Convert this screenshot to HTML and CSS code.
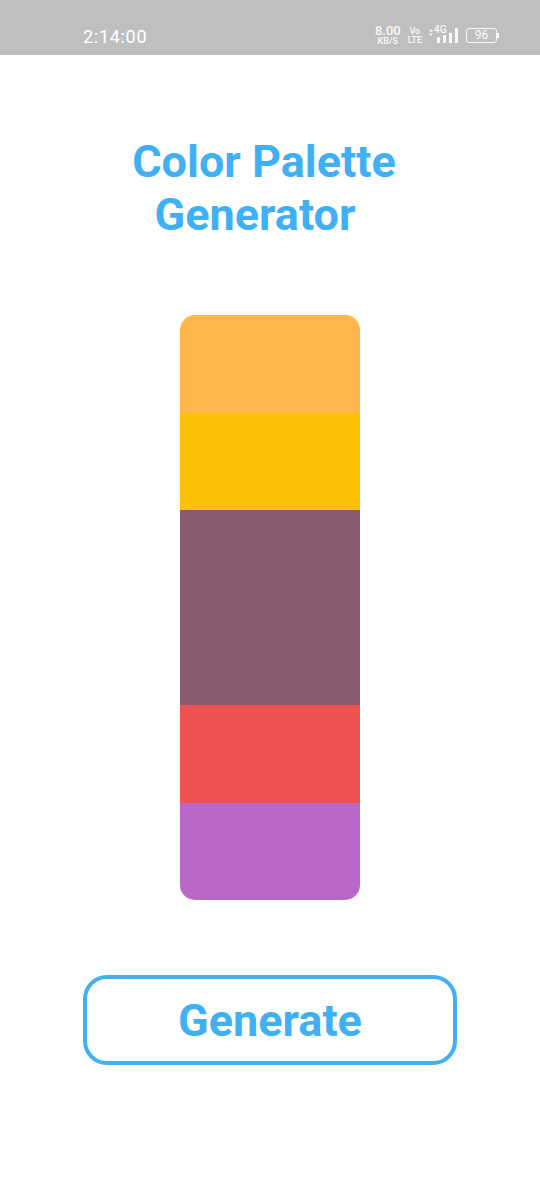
FILE: index.html
```html
<!DOCTYPE html>
<html lang="en">
<head>
<meta charset="UTF-8">
<meta name="viewport" content="width=device-width, initial-scale=1.0">
<title>Color Palette Generator</title>
<link rel="stylesheet" href="styles.css">
</head>
<body>

<!-- status bar -->
<div class="status-bar">
    <span class="clock">2:14:00</span>
    <div class="status-icons">
        <div class="speed"><span class="speed-num">8.00</span><span class="speed-unit">KB/S</span></div>
        <div class="volte"><span>Vo</span><span>LTE</span></div>
        <div class="signal">
            <span class="net">4G</span>
            <svg class="net-arrows" width="4" height="7" viewBox="0 0 4 7"><path d="M2 0 4 2.5H0zM0 4.5h4L2 7z" fill="#fff"/></svg>
            <svg class="bars" width="23" height="16" viewBox="0 0 23 16"><g fill="#fff"><rect x="1" y="9" width="3" height="6"/><rect x="7" y="7" width="3" height="8"/><rect x="13" y="5" width="3" height="10"/><rect x="19" y="0" width="3" height="15"/></g></svg>
        </div>
        <div class="battery"><span class="battery-body">96</span><span class="battery-tip"></span></div>
    </div>
</div>

<div class="page">
    <h1 class="title">Color Palette<br><span class="title-second">Generator</span></h1>

    <div class="palette">
        <div class="swatch swatch-orange"></div>
        <div class="swatch swatch-yellow"></div>
        <div class="swatch swatch-plum"></div>
        <div class="swatch swatch-red"></div>
        <div class="swatch swatch-purple"></div>
    </div>

    <button class="generate">Generate</button>
</div>

</body>
</html>
```

FILE: styles.css
```css
body {
    margin: 0;
    background-color: #fff;
    font-family: Roboto, "Liberation Sans", sans-serif;
}

.status-bar {
    display: flex;
    justify-content: space-between;
    align-items: center;
    height: 55px;
    padding: 16px 41px 0 83px;
    box-sizing: border-box;
    background-color: #bfbfbf;
    color: #fff;
}

.clock {
    margin-top: 1px;
    font-size: 18px;
    letter-spacing: 0.7px;
}

.status-icons {
    display: flex;
    align-items: center;
    gap: 7px;
    opacity: 0.9;
}

.speed, .volte {
    display: flex;
    flex-direction: column;
    align-items: center;
    font-weight: 500;
}

.speed-num {
    font-size: 13px;
    line-height: 12px;
}

.speed-unit {
    font-size: 9px;
    line-height: 9px;
}

.volte {
    font-size: 9px;
    line-height: 9px;
}

.signal {
    position: relative;
    display: flex;
    align-items: flex-end;
    justify-content: flex-end;
    width: 30px;
    height: 17px;
}

.net {
    position: absolute;
    left: 5px;
    top: -3px;
    font-size: 10px;
    font-weight: 500;
}

.net-arrows {
    position: absolute;
    left: 0;
    top: 2px;
}

.bars {
    display: block;
}

.battery {
    display: flex;
    align-items: center;
}

.battery-body {
    width: 29px;
    height: 13px;
    border: 1px solid #fff;
    border-radius: 3px;
    text-align: center;
    font-size: 12px;
    line-height: 13px;
}

.battery-tip {
    width: 2px;
    height: 5px;
    background-color: #fff;
}

.page {
    display: flex;
    flex-direction: column;
    align-items: center;
}

.title {
    margin: 80px 12px 0 0;
    color: #3fb0f4;
    font-size: 45px;
    font-weight: 700;
    line-height: 53px;
    text-align: center;
}

.title-second {
    padding-right: 18px;
}

.palette {
    display: flex;
    flex-direction: column;
    width: 180px;
    height: 585px;
    margin-top: 74px;
    border-radius: 15px;
    overflow: hidden;
}

.swatch {
    flex: 1;
}

.swatch-orange {
    background-color: #ffb74d;
}

.swatch-yellow {
    background-color: #ffc107;
}

.swatch-plum {
    flex: 2;
    background-color: #885a70;
}

.swatch-red {
    background-color: #ef5350;
}

.swatch-purple {
    background-color: #ba68c8;
}

.generate {
    width: 374px;
    height: 90px;
    margin-top: 75px;
    padding: 0;
    border: 4px solid #3fb0f4;
    border-radius: 24px;
    background-color: #fff;
    color: #3fb0f4;
    font-family: inherit;
    font-size: 45px;
    font-weight: 700;
}
```
